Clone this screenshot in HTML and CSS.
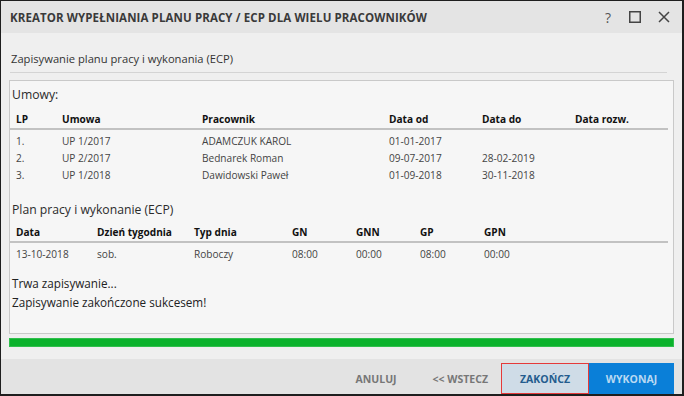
FILE: index.html
```html
<!DOCTYPE html>
<html lang="pl">
<head>
    <meta charset="UTF-8">
    <title>Kreator wypełniania planu pracy</title>
    <link rel="stylesheet" href="styles.css">
</head>
<body>
    <div class="window">
        <div class="title-bar">
            <span class="title">KREATOR WYPEŁNIANIA PLANU PRACY / ECP DLA WIELU PRACOWNIKÓW</span>
            <div class="title-icons">
                <span class="icon-help">?</span>
                <svg class="icon" width="12" height="12" viewBox="0 0 12 12"><rect x="0.75" y="0.75" width="10.5" height="10.5" fill="none" stroke="#444" stroke-width="1.5"/></svg>
                <svg class="icon" width="12" height="12" viewBox="0 0 12 12"><path d="M1 1 L11 11 M11 1 L1 11" stroke="#444" stroke-width="1.5"/></svg>
            </div>
        </div>

        <div class="content">
            <div class="step-title">Zapisywanie planu pracy i wykonania (ECP)</div>

            <div class="panel">
                <div class="section-title">Umowy:</div>
                <table class="grid contracts">
                    <colgroup>
                        <col style="width: 46px"><col style="width: 140px"><col style="width: 187px">
                        <col style="width: 93px"><col style="width: 93px"><col>
                    </colgroup>
                    <thead>
                        <tr><th>LP</th><th>Umowa</th><th>Pracownik</th><th>Data od</th><th>Data do</th><th>Data rozw.</th></tr>
                    </thead>
                    <tbody>
                        <tr class="first"><td>1.</td><td>UP 1/2017</td><td>ADAMCZUK KAROL</td><td>01-01-2017</td><td></td><td></td></tr>
                        <tr><td>2.</td><td>UP 2/2017</td><td>Bednarek Roman</td><td>09-07-2017</td><td>28-02-2019</td><td></td></tr>
                        <tr><td>3.</td><td>UP 1/2018</td><td>Dawidowski Paweł</td><td>01-09-2018</td><td>30-11-2018</td><td></td></tr>
                    </tbody>
                </table>

                <div class="section-title plan">Plan pracy i wykonanie (ECP)</div>
                <table class="grid plan-grid">
                    <colgroup>
                        <col style="width: 81px"><col style="width: 97px"><col style="width: 98px">
                        <col style="width: 64px"><col style="width: 64px"><col style="width: 64px"><col>
                    </colgroup>
                    <thead>
                        <tr><th>Data</th><th>Dzień tygodnia</th><th>Typ dnia</th><th>GN</th><th>GNN</th><th>GP</th><th>GPN</th></tr>
                    </thead>
                    <tbody>
                        <tr class="first"><td>13-10-2018</td><td>sob.</td><td>Roboczy</td><td>08:00</td><td>00:00</td><td>08:00</td><td>00:00</td></tr>
                    </tbody>
                </table>

                <div class="log">
                    <p>Trwa zapisywanie...</p>
                    <p>Zapisywanie zakończone sukcesem!</p>
                </div>
            </div>

            <div class="progress"><div class="progress-fill" style="width: 100%"></div></div>
        </div>

        <div class="footer">
            <button class="btn btn-flat btn-cancel">ANULUJ</button>
            <button class="btn btn-flat">&lt;&lt; WSTECZ</button>
            <button class="btn btn-finish">ZAKOŃCZ</button>
            <button class="btn btn-primary">WYKONAJ</button>
        </div>
    </div>
</body>
</html>
```

FILE: styles.css
```css
* {
    box-sizing: border-box;
}
body {
    margin: 0;
    font-family: "Open Sans", Arial, sans-serif;
    color: #333;
    background: #fff;
}
.window {
    width: 684px;
    height: 396px;
    border-style: solid;
    border-color: #1e1e1e;
    border-width: 1px 2px 2px 1px;
    display: flex;
    flex-direction: column;
    background: #efefef;
}
.title-bar {
    height: 32px;
    background: #e4e4e4;
    display: flex;
    align-items: center;
    justify-content: space-between;
    padding: 0 12px 0 9px;
}
.title {
    font-size: 11.5px;
    font-weight: 700;
    color: #3a3a3a;
    letter-spacing: 0.1px;
}
.title-icons {
    display: flex;
    align-items: center;
    gap: 17px;
}
.icon-help {
    font-size: 14px;
    color: #555;
    width: 10px;
    text-align: center;
    margin-right: -1px;
}
.icon {
    display: block;
}
.content {
    flex: 1;
    padding: 0 8px 0 8px;
}
.step-title {
    font-size: 11.2px;
    margin: 0 7px 0 1px;
    padding: 18px 0 5px 1px;
    line-height: 16px;
    border-bottom: 1px solid #d4d4d4;
}
.panel {
    margin-top: 7px;
    height: 254px;
    background: #f6f6f6;
    border: 1px solid #c9c9c9;
    padding: 5px 0 0 0;
}
.section-title {
    font-size: 12.2px;
    line-height: 18px;
    padding-left: 2px;
    color: #2b2b2b;
}
.section-title.plan {
    margin-top: 17px;
}
.grid {
    width: 658px;
    border-collapse: collapse;
    table-layout: fixed;
    font-size: 10.1px;
    margin-top: 6px;
}
.grid.plan-grid {
    margin-top: 4px;
}
.grid th {
    text-align: left;
    font-weight: 700;
    color: #111;
    height: 19px;
    padding: 0 0 0 6px;
    border-bottom: 2px solid #c2c2c2;
}
.grid td {
    height: 17.5px;
    padding: 0 0 0 6px;
    color: #444;
    white-space: nowrap;
}
.grid tr.first td {
    height: 20px;
    padding-top: 3px;
}
.log {
    margin-top: 12px;
    font-size: 11.7px;
    padding-left: 2px;
    color: #222;
}
.log p {
    margin: 0;
    line-height: 19px;
}
.progress {
    margin-top: 4px;
    height: 9px;
    background: #d8d8d8;
}
.progress-fill {
    height: 100%;
    background: #0bb22c;
    border: 1px solid #2fbf4c;
}
.footer {
    height: 35px;
    background: #e3e3e3;
    display: flex;
    justify-content: flex-end;
    align-items: flex-end;
    padding-right: 8px;
}
.btn {
    font-family: "Open Sans", Arial, sans-serif;
    font-size: 10.5px;
    font-weight: 700;
    height: 31px;
    border: none;
    cursor: pointer;
}
.btn-flat {
    background: transparent;
    color: #777;
    padding: 0 13px;
}
.btn-cancel {
    padding-right: 23px;
}
.btn-finish {
    width: 88px;
    background: #cfdce7;
    color: #245c8e;
    border: 1px solid #e53a3a;
}
.btn-primary {
    width: 85px;
    background: #0a7fd8;
    color: #b9d9f2;
}
```
